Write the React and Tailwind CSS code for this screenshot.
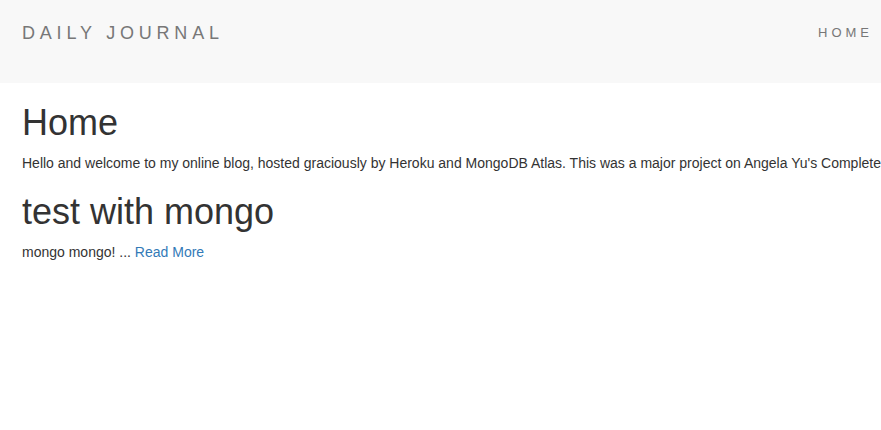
import React from "react";

const posts = [{ id: 1, title: "test with mongo", body: "mongo mongo!" }];

export default function App() {
  return (
    <div className="min-h-[430px] bg-white font-['Liberation_Sans',Arial,sans-serif] text-[14px] text-[#333] overflow-hidden">
      <nav className="h-[83px] bg-[#f8f8f8] flex items-start justify-between">
        <a className="pl-[22px] pt-[23px] text-[18px] leading-[20px] tracking-[4.8px] text-[#777] whitespace-nowrap">
          DAILY JOURNAL
        </a>
        <a className="pr-[8px] pt-[25px] text-[13px] leading-[15px] tracking-[4px] text-[#777]">
          HOME
        </a>
      </nav>

      <main className="px-[22px]">
        <h1 className="mt-[20px] mb-[10px] text-[36px] leading-[40px]">Home</h1>
        <p className="mb-[10px] leading-[20px] whitespace-nowrap">
          Hello and welcome to my online blog, hosted graciously by Heroku and
          MongoDB Atlas. This was a major project on Angela Yu's Complete
          Web Development Bootcamp.
        </p>

        {posts.map((post) => (
          <div key={post.id}>
            <h1 className="mt-[19px] mb-[10px] text-[36px] leading-[40px]">
              {post.title}
            </h1>
            <p className="leading-[20px]">
              {post.body} ...{" "}
              <a className="text-[#337ab7]" href="#">
                Read More
              </a>
            </p>
          </div>
        ))}
      </main>
    </div>
  );
}
